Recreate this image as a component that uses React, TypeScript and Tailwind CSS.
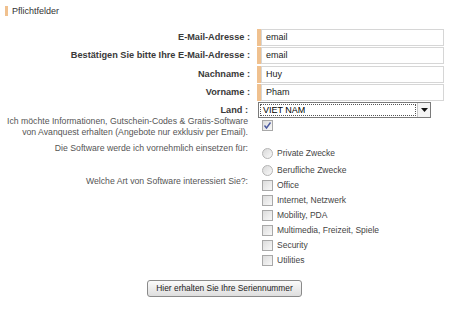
import React from "react";

const labelCls = "w-[250px] shrink-0 text-right font-bold text-[9.2px] leading-[11px] text-[#3a3a3a]";
const textCls = "w-[250px] shrink-0 text-right text-[8.7px] leading-[11px] text-[#555] pr-[2px]";
const optCls = "flex items-center gap-[4px] h-[11px] text-[8.5px] leading-[11px] text-[#444]";

function Field({ label, value }: { label: string; value: string }) {
  return (
    <div className="flex items-center h-[17px]">
      <div className={labelCls}>{label}</div>
      <div className="ml-[7px] w-[4px] h-[17px] bg-[#f0c18f]" />
      <div className="w-[183px] h-[17px] border border-[#d6d6d6] flex items-center pl-[4px] text-[9px] leading-[11px] text-[#222]">
        {value}
      </div>
    </div>
  );
}

function Check({ checked = false }: { checked?: boolean }) {
  return (
    <div className="w-[11px] h-[11px] shrink-0 border border-[#a8a8a8] bg-gradient-to-br from-[#dcdcdc] to-[#f8f8f8] flex items-center justify-center">
      {checked && (
        <svg width="9" height="9" viewBox="0 0 9 9">
          <path d="M1.5 4.5 L3.5 7 L7.5 1.5" fill="none" stroke="#4b5aa0" strokeWidth="1.4" />
        </svg>
      )}
    </div>
  );
}

function Radio() {
  return (
    <div className="w-[11px] h-[11px] shrink-0 rounded-full border border-[#b4b4b4] bg-gradient-to-br from-[#d8d8d8] to-[#fafafa]" />
  );
}

export default function App() {
  const options = ["Office", "Internet, Netzwerk", "Mobility, PDA", "Multimedia, Freizeit, Spiele", "Security", "Utilities"];

  return (
    <div className="w-[450px] h-[310px] bg-white font-['Liberation_Sans',Arial,sans-serif] overflow-hidden">
      <div className="flex items-center pt-[6px] pl-[5px] h-[16px]">
        <div className="w-[3px] h-[10px] bg-[#f0c18f]" />
        <span className="ml-[4px] text-[9px] leading-[10px] text-[#333]">Pflichtfelder</span>
      </div>

      <div className="mt-[13px] flex flex-col gap-[1.4px]">
        <Field label="E-Mail-Adresse :" value="email" />
        <Field label="Bestätigen Sie bitte Ihre E-Mail-Adresse :" value="email" />
        <Field label="Nachname :" value="Huy" />
        <Field label="Vorname :" value="Pham" />
      </div>

      <div className="mt-[1px] flex items-center h-[16px]">
        <div className={labelCls + " pr-[2px]"}>Land :</div>
        <div className="ml-[8px] w-[173px] h-[16px] border border-[#7a7a7a] flex">
          <div className="flex-1 m-[1px] border border-dotted border-[#555] flex items-center pl-[2px] text-[9px] leading-[11px] text-black">
            VIET NAM
          </div>
          <div className="w-[13px] flex items-center justify-center border-l border-[#c8c8c8] bg-[#f4f4f4]">
            <svg width="7" height="4" viewBox="0 0 7 4">
              <path d="M0 0 H7 L3.5 4 Z" fill="#111" />
            </svg>
          </div>
        </div>
      </div>

      <div className="-mt-[2.5px] flex">
        <div className={textCls}>
          Ich möchte Informationen, Gutschein-Codes &amp; Gratis-Software
          <br />
          von Avanquest erhalten (Angebote nur exklusiv per Email).
        </div>
        <div className="ml-[12px] mt-[4px]">
          <Check checked />
        </div>
      </div>

      <div className="mt-[5px] flex">
        <div className={textCls}>Die Software werde ich vornehmlich einsetzen für:</div>
        <div className="ml-[12px] mt-[5px] flex flex-col gap-[6px]">
          <div className={optCls}>
            <Radio />
            Private Zwecke
          </div>
          <div className={optCls}>
            <Radio />
            Berufliche Zwecke
          </div>
        </div>
      </div>

      <div className="flex">
        <div className={textCls}>Welche Art von Software interessiert Sie?:</div>
        <div className="ml-[12px] mt-[4px] flex flex-col gap-[4px]">
          {options.map((o) => (
            <div key={o} className={optCls}>
              <Check />
              {o}
            </div>
          ))}
        </div>
      </div>

      <div className="mt-[14.5px] flex pl-[147px]">
        <button className="w-[155px] h-[17px] rounded-[3px] border border-[#8a8a8a] bg-gradient-to-b from-[#fbfbfb] to-[#dedede] text-[8.4px] leading-[11px] text-[#222] font-['Liberation_Sans',Arial,sans-serif]">
          Hier erhalten Sie Ihre Seriennummer
        </button>
      </div>
    </div>
  );
}
